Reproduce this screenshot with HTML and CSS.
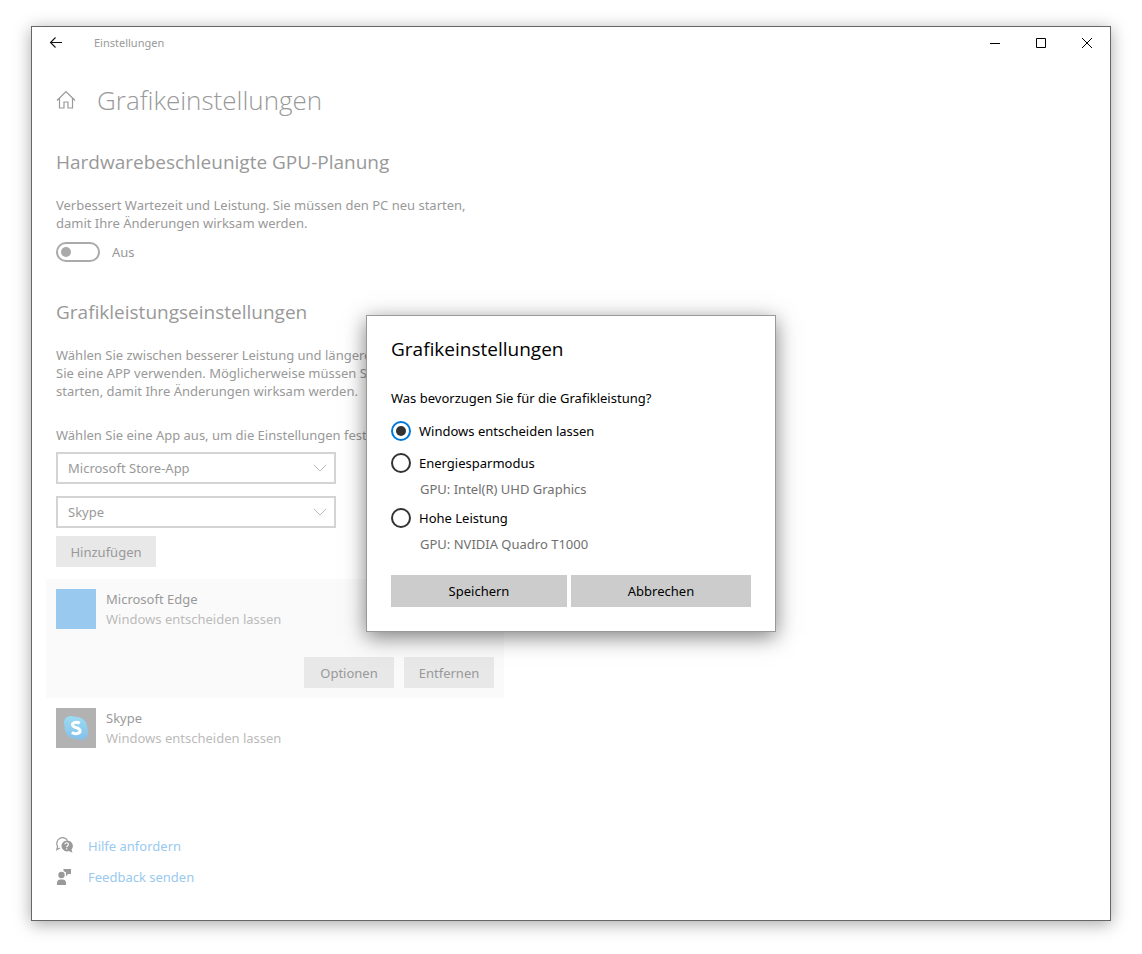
FILE: index.html
```
<!DOCTYPE html>
<html lang="de">
<head>
    <meta charset="UTF-8">
    <meta name="viewport" content="width=device-width, initial-scale=1.0">
    <title>Grafikeinstellungen</title>
    <link rel="stylesheet" href="styles.css">
</head>
<body>
    <div class="window">
        <header class="titlebar">
            <button type="button" class="back-button" aria-label="Zurück">
                <svg width="14" height="12" viewBox="0 0 14 12"><path d="M13 5.500H1.500M6.500 .5l-5 5 5 5" fill="none" stroke="#111" stroke-width="1.100"/></svg>
            </button>
            <span class="titlebar-text">Einstellungen</span>
            <div class="window-buttons">
                <button type="button" class="window-button" aria-label="Minimieren">
                    <svg width="10" height="10" viewBox="0 0 10 10"><path d="M0 5.500h10" stroke="#000"/></svg>
                </button>
                <button type="button" class="window-button" aria-label="Maximieren">
                    <svg width="10" height="10" viewBox="0 0 10 10"><path d="M.5 .5h9v9h-9z" fill="none" stroke="#000"/></svg>
                </button>
                <button type="button" class="window-button" aria-label="Schließen">
                    <svg width="10" height="10" viewBox="0 0 10 10"><path d="M0 0l10 10M10 0L0 10" stroke="#000"/></svg>
                </button>
            </div>
        </header>

        <main class="content">
            <div class="page-title">
                <svg width="20" height="20" viewBox="0 0 20 20"><path d="M1 10.500L10 1.500l9 9M3.500 8.500v9.500h4.500v-6h4v6h4.500V8.500" fill="none" stroke="#999" stroke-width="1.200"/></svg>
                <h1>Grafikeinstellungen</h1>
            </div>

            <h2>Hardwarebeschleunigte GPU-Planung</h2>
            <p>Verbessert Wartezeit und Leistung. Sie müssen den PC neu starten,<br>damit Ihre Änderungen wirksam werden.</p>
            <div class="toggle-row">
                <input type="checkbox" role="switch" id="gpu-planung" class="toggle">
                <label for="gpu-planung">Aus</label>
            </div>

            <h2 class="second-heading">Grafikleistungseinstellungen</h2>
            <p>Wählen Sie zwischen besserer Leistung und längerer<br>Sie eine APP verwenden. Möglicherweise müssen Sie<br>starten, damit Ihre Änderungen wirksam werden.</p>

            <label for="app-typ" class="select-label">Wählen Sie eine App aus, um die Einstellungen festzulegen</label>
            <div class="select-box">
                <select id="app-typ">
                    <option>Microsoft Store-App</option>
                </select>
                <svg class="chevron" width="14" height="8" viewBox="0 0 14 8"><path d="M1 1l6 6 6-6" fill="none" stroke="#bbb"/></svg>
            </div>
            <div class="select-box">
                <select id="app-name" aria-label="App">
                    <option>Skype</option>
                </select>
                <svg class="chevron" width="14" height="8" viewBox="0 0 14 8"><path d="M1 1l6 6 6-6" fill="none" stroke="#bbb"/></svg>
            </div>
            <button type="button" class="button add-button">Hinzufügen</button>

            <ul class="app-list">
                <li class="app selected">
                    <div class="app-info">
                        <span class="app-icon edge"></span>
                        <div>
                            <div class="app-name">Microsoft Edge</div>
                            <div class="app-mode">Windows entscheiden lassen</div>
                        </div>
                    </div>
                    <div class="app-buttons">
                        <button type="button" class="button">Optionen</button>
                        <button type="button" class="button">Entfernen</button>
                    </div>
                </li>
                <li class="app">
                    <div class="app-info">
                        <span class="app-icon skype">
                            <svg width="26" height="26" viewBox="0 0 26 26">
                                <defs>
                                    <linearGradient id="skype-blue" x1="0" y1="0" x2="0" y2="1">
                                        <stop offset="0" stop-color="#9bdcf3"/>
                                        <stop offset="1" stop-color="#85bfe8"/>
                                    </linearGradient>
                                </defs>
                                <path d="M8 1C3.500 1 1 4 1 7.500c0 1.500.5 2.500.5 4.500 0 7 5 12 11.500 12 2 0 3.500 1 5.500 1 4 0 6.500-3 6.500-6.500 0-2-.5-3-.5-5C24.500 7 20 2 13.500 2 11 2 10 1 8 1z" fill="url(#skype-blue)"/>
                                <path d="M16.800 8.300c-2.300-1.400-7.300-1.500-7.300 1.400 0 3.600 7.600 2.300 7.600 6.100 0 3.400-5.300 3.400-8.300 1.700" fill="none" stroke="#fff" stroke-width="3"/>
                            </svg>
                        </span>
                        <div>
                            <div class="app-name">Skype</div>
                            <div class="app-mode">Windows entscheiden lassen</div>
                        </div>
                    </div>
                </li>
            </ul>

            <nav class="links">
                <a href="#hilfe">
                    <svg width="18" height="18" viewBox="0 0 18 18">
                        <path d="M4 11L.8 12.600l.8-3.200A5.500 5.500 0 1 1 11.500 3.500" fill="none" stroke="#999" stroke-width="1.200"/>
                        <path d="M10.500 3.500a5.500 5.500 0 1 0 2.500 10.600l3.500 1.700-1-3.300A5.500 5.500 0 0 0 10.500 3.500z" fill="#999"/>
                        <path d="M8.900 7.300c.2-2.200 3.600-2 3.500.1 0 1.300-1.700 1.300-1.700 2.900M10.700 11.300v1.300" fill="none" stroke="#fff" stroke-width="1.200"/>
                    </svg>
                    <span>Hilfe anfordern</span>
                </a>
                <a href="#feedback">
                    <svg width="18" height="18" viewBox="0 0 18 18">
                        <circle cx="5.500" cy="7" r="3.200" fill="#999"/>
                        <path d="M1 17v-2a3.500 3.500 0 0 1 3.500-3.500h2A3.500 3.500 0 0 1 10 15v2zM7.500 1H15v5h-3l-2 2.500V4.500L7.500 3z" fill="#999"/>
                    </svg>
                    <span>Feedback senden</span>
                </a>
            </nav>
        </main>

        <div class="overlay">
            <form class="dialog" role="dialog" aria-labelledby="dialog-title">
                <h3 id="dialog-title">Grafikeinstellungen</h3>
                <fieldset>
                    <legend>Was bevorzugen Sie für die Grafikleistung?</legend>
                    <div class="option">
                        <input type="radio" name="leistung" id="standard" checked>
                        <label for="standard">Windows entscheiden lassen</label>
                    </div>
                    <div class="option">
                        <input type="radio" name="leistung" id="sparen">
                        <label for="sparen">Energiesparmodus</label>
                    </div>
                    <div class="gpu">GPU: Intel(R) UHD Graphics</div>
                    <div class="option">
                        <input type="radio" name="leistung" id="hoch">
                        <label for="hoch">Hohe Leistung</label>
                    </div>
                    <div class="gpu">GPU: NVIDIA Quadro T1000</div>
                </fieldset>
                <div class="dialog-buttons">
                    <button type="submit">Speichern</button>
                    <button type="button">Abbrechen</button>
                </div>
            </form>
        </div>
    </div>
</body>
</html>
```
FILE: styles.css
```
* {
    box-sizing: border-box;
}
body {
    margin: 0;
    padding: 26px 31px 33px;
    min-height: 100vh;
    display: flex;
    background-color: #fff;
    font-family: "Noto Sans", "Open Sans", sans-serif;
    font-size: 13px;
    line-height: 18px;
    color: #999;
}
h1, h2, h3, p, ul, fieldset, legend {
    margin: 0;
    padding: 0;
    font-weight: normal;
}
h1, h2, h3 {
    font-family: "Open Sans", "Noto Sans", sans-serif;
}
button, select {
    font: inherit;
    color: inherit;
    border: none;
    border-radius: 0;
    cursor: pointer;
}
svg {
    display: block;
    flex: none;
}

/* Window */
.window {
    position: relative;
    flex: 1;
    display: flex;
    flex-direction: column;
    border: 1px solid #666;
    background-color: #fff;
    box-shadow: 0 3px 16px rgba(0, 0, 0, 0.35);
}
.titlebar {
    display: flex;
    align-items: center;
    height: 32px;
}
.back-button {
    display: flex;
    justify-content: center;
    width: 48px;
    padding: 0;
    background: none;
}
.titlebar-text {
    margin-left: 14px;
    font-size: 11px;
}
.window-buttons {
    display: flex;
    margin-left: auto;
}
.window-button {
    display: flex;
    align-items: center;
    justify-content: center;
    width: 46px;
    height: 32px;
    padding: 0;
    background: none;
}

/* Page */
.content {
    width: 100%;
    max-width: 486px;
    padding: 21px 24px 32px;
}
.page-title {
    display: flex;
    align-items: center;
    gap: 21px;
}
h1 {
    font-size: 26px;
    font-weight: 300;
    line-height: 40px;
}
h2 {
    margin: 28px 0 20px;
    font-size: 19px;
    line-height: 28px;
}
.second-heading {
    margin-top: 36px;
}
.toggle-row {
    display: flex;
    align-items: center;
    gap: 12px;
    margin-top: 10px;
}
.toggle {
    appearance: none;
    width: 44px;
    height: 20px;
    margin: 0;
    padding: 3px;
    border: 2px solid #aaa;
    border-radius: 10px;
}
.toggle::before {
    content: "";
    display: block;
    width: 10px;
    height: 10px;
    border-radius: 50%;
    background-color: #aaa;
}
.select-label {
    display: block;
    margin: 26px 0 8px;
    white-space: nowrap;
}
.select-box {
    position: relative;
    width: 280px;
    margin-bottom: 12px;
}
.select-box select {
    display: block;
    appearance: none;
    width: 100%;
    height: 32px;
    padding: 0 32px 0 10px;
    border: 2px solid #d4d4d4;
    background-color: #fff;
}
.chevron {
    position: absolute;
    top: 12px;
    right: 9px;
    pointer-events: none;
}
.button {
    width: 90px;
    height: 31px;
    padding: 0;
    background-color: #e8e8e8;
}
.add-button {
    display: block;
    width: 100px;
    margin-top: -4px;
}

/* App list */
.app-list {
    margin: 12px -10px 0;
    list-style: none;
}
.app {
    padding: 10px;
}
.selected {
    background-color: #fafafa;
}
.app-info {
    display: flex;
    gap: 10px;
    line-height: 20px;
}
.app-icon {
    display: flex;
    align-items: center;
    justify-content: center;
    width: 40px;
    height: 40px;
}
.edge {
    background-color: #99c9ef;
}
.skype {
    background-color: #b2b2b2;
}
.app-mode {
    color: #bbb;
}
.app-buttons {
    display: flex;
    justify-content: flex-end;
    gap: 10px;
    margin-top: 28px;
}

.links {
    display: flex;
    flex-direction: column;
    align-items: flex-start;
    gap: 11px;
    margin-top: 78px;
    line-height: 20px;
}
.links a {
    display: flex;
    align-items: center;
    gap: 14px;
    color: #99c9ef;
    text-decoration: none;
}

/* Dialog */
.overlay {
    position: absolute;
    inset: 0;
    display: flex;
    align-items: center;
    justify-content: center;
}
.dialog {
    width: 410px;
    padding: 19px 24px 24px;
    border: 1px solid #999;
    background-color: #fff;
    box-shadow: 0 5px 20px rgba(0, 0, 0, 0.5);
    color: #000;
    line-height: 20px;
}
h3 {
    margin-bottom: 25px;
    font-size: 19px;
    line-height: 28px;
}
fieldset {
    border: none;
}
.option {
    display: flex;
    align-items: center;
    gap: 8px;
    margin-top: 12px;
}
legend + .option {
    margin-top: 13px;
}
.option input {
    appearance: none;
    display: flex;
    align-items: center;
    justify-content: center;
    width: 20px;
    height: 20px;
    margin: 0;
    border: 2px solid #333;
    border-radius: 50%;
}
.option input:checked {
    border-color: #0078d7;
}
.option input:checked::before {
    content: "";
    width: 10px;
    height: 10px;
    border-radius: 50%;
    background-color: #333;
}
.gpu {
    margin: 6px 0 0 29px;
    color: #707070;
}
.gpu + .option {
    margin-top: 9px;
}
.dialog-buttons {
    display: grid;
    grid-template-columns: 176px 1fr;
    gap: 4px;
    margin-top: 21px;
}
.dialog-buttons button {
    height: 32px;
    background-color: #ccc;
}
```
